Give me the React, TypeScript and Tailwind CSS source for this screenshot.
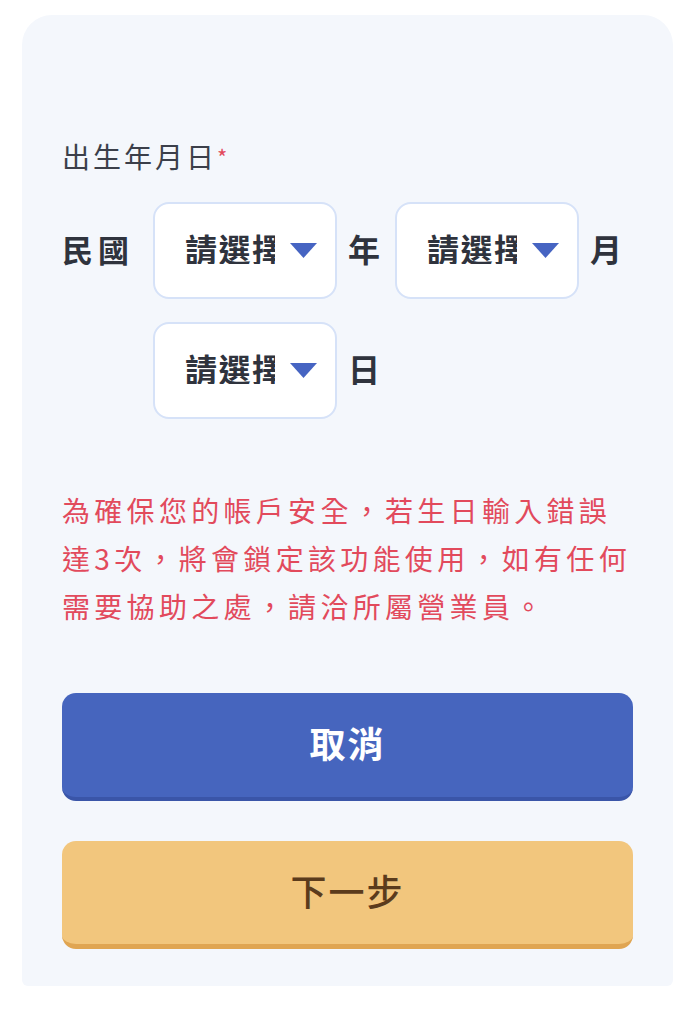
import React from 'react';

const FONT = "font-['Noto_Sans_CJK_TC','Noto_Sans',sans-serif]";

const Caret = () => (
  <svg width="27" height="15" viewBox="0 0 27 15" className="shrink-0">
    <path d="M0 0 H27 L13.5 15 Z" fill="#4664c2" />
  </svg>
);

const SelectBox: React.FC = () => (
  <div className="w-[184px] h-[97px] shrink-0 rounded-[16px] border-2 border-[#d6e2f8] bg-white flex items-center pl-[30px]">
    <span className="w-[90px] mb-[6px] overflow-hidden whitespace-nowrap text-[32px] font-bold tracking-[1.5px] text-[#2f333d] leading-none">
      請選擇
    </span>
    <span className="ml-[15px]">
      <Caret />
    </span>
  </div>
);

const DatePart: React.FC<{ unit: string }> = ({ unit }) => (
  <div className="flex items-center gap-[11px]">
    <SelectBox />
    <span className="w-[34px] mb-[6px] text-[32px] font-bold text-[#2f333d] leading-none">{unit}</span>
  </div>
);

export default function App() {
  return (
    <div className={`min-h-[1024px] bg-white pt-[15px] pl-[22px] pr-[23px] ${FONT}`}>
      <div className="bg-[#f4f7fc] rounded-t-[30px] rounded-b-[6px] pt-[121px] pb-[37px] px-[40px]">
        <div className="text-[28px] leading-[40px] tracking-[3px] text-[#3b3f4a]">
          出生年月日<span className="text-[#e24a5c] text-[22px] align-top">*</span>
        </div>

        <div className="mt-[26px] flex items-start">
          <div className="w-[91px] h-[97px] pb-[4px] shrink-0 flex items-center text-[31px] font-bold tracking-[5px] text-[#2f333d] leading-none">
            民國
          </div>
          <div className="flex flex-wrap gap-x-[13px] gap-y-[23px] w-[481px]">
            <DatePart unit="年" />
            <DatePart unit="月" />
            <DatePart unit="日" />
          </div>
        </div>

        <p className="mt-[67px] text-[28px] leading-[48px] tracking-[4.3px] text-[#e24a5c]">
          為確保您的帳戶安全，若生日輸入錯誤達3次，將會鎖定該功能使用，如有任何需要協助之處，請洽所屬營業員。
        </p>

        <button className="mt-[63px] w-full h-[108px] pb-[6px] rounded-[14px] bg-[#4665be] border-b-4 border-[#3a55a8] text-white text-[36px] font-bold tracking-[2px] flex items-center justify-center">
          取消
        </button>
        <button className="mt-[40px] w-full h-[108px] pb-[6px] rounded-[14px] bg-[#f2c67d] border-b-[5px] border-[#e0a552] text-[#5b3b1c] text-[36px] font-medium tracking-[2px] flex items-center justify-center">
          下一步
        </button>
      </div>
    </div>
  );
}
